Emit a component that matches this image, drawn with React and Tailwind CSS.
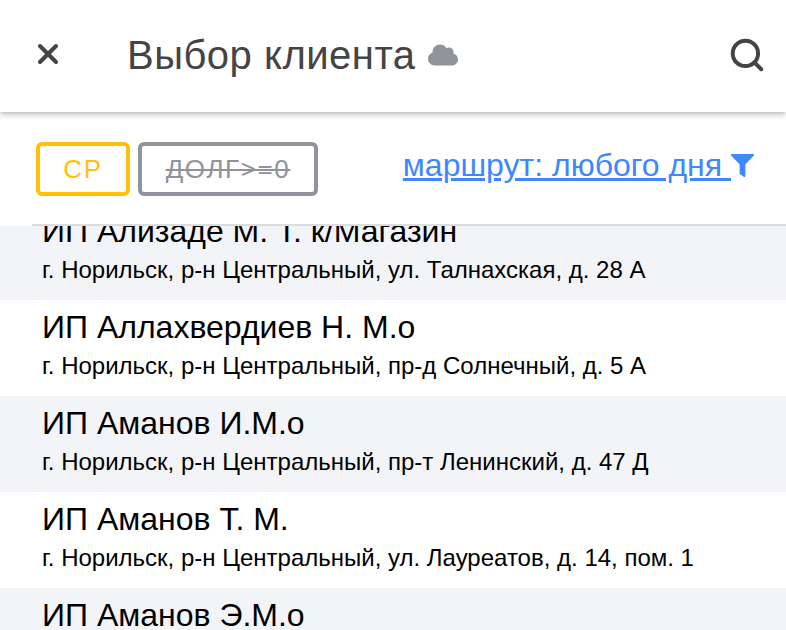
import { FaCloud, FaFilter } from 'react-icons/fa';
import { Search, X } from 'lucide-react';

const clients = [
  { name: 'ИП Ализаде М. Т. к/Магазин', address: 'г. Норильск, р-н Центральный, ул. Талнахская, д. 28 А' },
  { name: 'ИП Аллахвердиев Н. М.о', address: 'г. Норильск, р-н Центральный, пр-д Солнечный, д. 5 А' },
  { name: 'ИП Аманов И.М.о', address: 'г. Норильск, р-н Центральный, пр-т Ленинский, д. 47 Д' },
  { name: 'ИП Аманов Т. М.', address: 'г. Норильск, р-н Центральный, ул. Лауреатов, д. 14, пом. 1' },
  { name: 'ИП Аманов Э.М.о', address: 'г. Норильск, р-н Центральный, ул. Кирова, д. 1' },
];

const App = () => {
  return (
    <div className="h-[630px] flex flex-col overflow-hidden bg-white font-['Liberation_Sans',sans-serif]">
      <header className="relative z-10 h-[112px] shrink-0 flex items-center pl-[32px] pr-[20px] pb-[2px] bg-white shadow-[0_2px_6px_rgba(0,0,0,0.3)]">
        <X size={32} strokeWidth={3} className="-mt-[2px] text-[#444444]" />
        <h1 className="ml-[63px] text-[40px] tracking-[0.5px] text-[#444444]">Выбор клиента</h1>
        <FaCloud size={30} className="ml-[12px] text-[#91939c]" />
        <Search size={38} strokeWidth={2.5} className="ml-auto text-[#444444]" />
      </header>

      <div className="h-[114px] shrink-0 ml-[32px] pl-[4px] pr-[32px] pt-[2px] flex items-center justify-between border-b-2 border-[#dddddd] bg-white">
        <div className="flex gap-[8px]">
          <span className="h-[54px] w-[94px] flex items-center justify-center rounded-[6px] border-4 border-[#ffc107] text-[26px] tracking-[1.6px] text-[#ffc107]">СР</span>
          <span className="h-[54px] w-[180px] flex items-center justify-center rounded-[6px] border-4 border-[#91939c] text-[26px] tracking-[1.6px] text-[#91939c] line-through">ДОЛГ&gt;=0</span>
        </div>
        <div className="-mt-[8px] flex items-start">
          <a className="text-[32px] text-[#3f87ff] underline whitespace-pre">маршрут: любого дня </a>
          <FaFilter size={23} className="mt-[13px] text-[#3f87ff]" />
        </div>
      </div>

      <div className="flex-1 overflow-hidden">
        <ul className="-mt-[22px]">
          {clients.map((c, i) => (
            <li key={c.name} className={`h-[96px] pl-[42px] pt-[5px] ${i % 2 === 0 ? 'bg-[#f3f4f8]' : 'bg-white'}`}>
              <div className="text-[32px] leading-[45px] text-black">{c.name}</div>
              <div className="text-[24px] leading-[32px] text-black">{c.address}</div>
            </li>
          ))}
        </ul>
      </div>
    </div>
  );
};

export default App;
